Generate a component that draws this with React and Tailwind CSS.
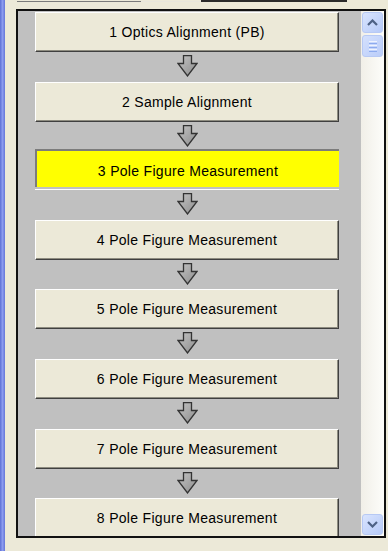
import React from "react";

const items = [
  "1 Optics Alignment (PB)",
  "2 Sample Alignment",
  "3 Pole Figure Measurement",
  "4 Pole Figure Measurement",
  "5 Pole Figure Measurement",
  "6 Pole Figure Measurement",
  "7 Pole Figure Measurement",
  "8 Pole Figure Measurement",
];

function DownArrow() {
  return (
    <svg width="21" height="22" viewBox="0 0 21 22">
      <defs>
        <linearGradient id="ag" x1="0" y1="0" x2="1" y2="1">
          <stop offset="0" stopColor="#c4c4c4" />
          <stop offset="1" stopColor="#8c8c8c" />
        </linearGradient>
      </defs>
      <path
        d="M6.5 0.5 H14.5 V8.5 H20 L10.5 21 L1 8.5 H6.5 Z"
        fill="url(#ag)"
        stroke="#333"
        strokeWidth="1.3"
        strokeLinejoin="miter"
      />
    </svg>
  );
}

function Chevron({ up }) {
  return (
    <svg width="11" height="7" viewBox="0 0 11 7">
      <path
        d={up ? "M1 6 L5.5 1.5 L10 6" : "M1 1 L5.5 5.5 L10 1"}
        fill="none"
        stroke="#4D6185"
        strokeWidth="2.2"
      />
    </svg>
  );
}

function ScrollBtn({ up }) {
  return (
    <div className="h-[21px] w-full rounded-[3px] border border-[#B7C9F4] bg-linear-to-br from-[#D9E4FE] to-[#B6CAF8] flex items-center justify-center">
      <Chevron up={up} />
    </div>
  );
}

function Button({ label, active }) {
  if (active) {
    return (
      <div className="h-[41px] w-[304px] shrink-0 border-b border-white pb-[2px] -mt-[2px] flex">
        <div className="flex-1 bg-[#FFFF00] border-t-2 border-l-2 border-[#7C7C7C] flex items-center justify-center pt-[5px] text-[14px] tracking-[0.3px] text-black">
          {label}
        </div>
      </div>
    );
  }
  return (
    <div className="h-[40px] w-[304px] shrink-0 bg-[#ECE9D8] border-t border-l border-white border-r border-b border-r-[#404040] border-b-[#404040] shadow-[inset_-1px_-1px_0_#8E8C80] flex items-center justify-center pt-[1px] text-[14px] tracking-[0.3px] text-black">
      {label}
    </div>
  );
}

export default function App() {
  return (
    <div className="w-[388px] h-[551px] bg-[#ECE9D8] flex overflow-hidden font-['Liberation_Sans',Arial,sans-serif]">
      <div className="w-[5px] h-full bg-linear-to-r from-[#5E70D4] via-[#8C9BEF] to-[#6677D8]" />
      <div className="flex flex-col pl-[11px]">
        <div className="h-[9px] flex items-start">
          <div className="mt-[1px] h-[1px] w-[124px] bg-[#7A7A7A] ml-[1px]" />
          <div className="mt-[1px] h-[1px] w-[60px] bg-[#E8E6DC]" />
          <div className="mt-[0px] h-[2px] w-[146px] bg-[#2A2A2A]" />
        </div>
        <div className="h-[529px] w-[370px] border-2 border-[#111] flex">
          <div className="w-[343px] h-full bg-[#C0C0C0] pt-[1px] pl-[17px] flex flex-col overflow-hidden">
            {items.map((label, i) => (
              <React.Fragment key={i}>
                <Button label={label} active={i === 2} />
                {i < items.length - 1 && (
                  <div className="h-[29.6px] w-[304px] shrink-0 flex justify-center pt-[3px] pl-[1px]">
                    <DownArrow />
                  </div>
                )}
              </React.Fragment>
            ))}
          </div>
          <div className="w-[23px] h-full bg-linear-to-r from-[#F1EFE8] to-[#FDFDFA] flex flex-col justify-between p-[1px]">
            <div className="flex flex-col gap-[2px]">
              <ScrollBtn up />
              <div className="h-[22px] w-full rounded-[3px] border border-[#B7C9F4] bg-linear-to-br from-[#D4E0FD] to-[#BACDF9] flex flex-col items-center justify-center gap-[1px]">
                <div className="w-[8px] h-[1px] bg-[#EEF3FE]" />
                <div className="w-[8px] h-[1px] bg-[#8DABEE]" />
                <div className="w-[8px] h-[1px] bg-[#EEF3FE]" />
                <div className="w-[8px] h-[1px] bg-[#8DABEE]" />
                <div className="w-[8px] h-[1px] bg-[#EEF3FE]" />
                <div className="w-[8px] h-[1px] bg-[#8DABEE]" />
              </div>
            </div>
            <ScrollBtn />
          </div>
        </div>
      </div>
    </div>
  );
}
